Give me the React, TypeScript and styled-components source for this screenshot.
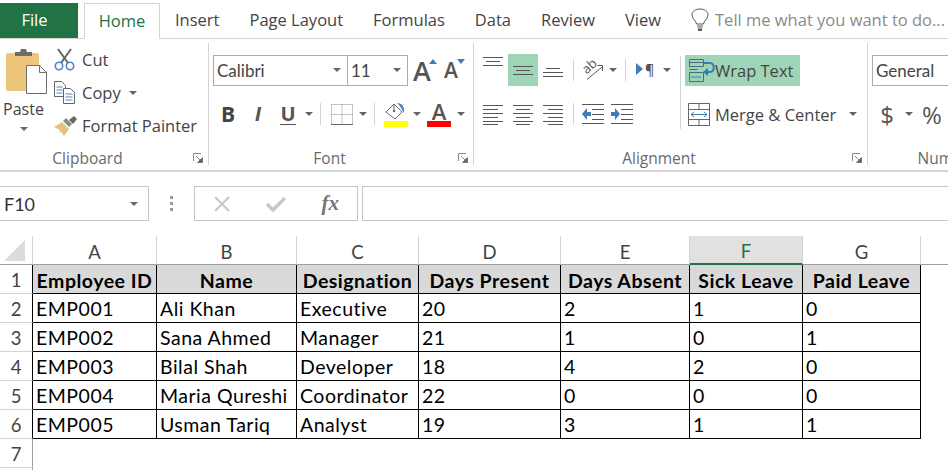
import styled, { createGlobalStyle } from 'styled-components';

const GlobalStyle = createGlobalStyle`
  html, body {
    margin: 0;
    background: #fff;
    overflow: hidden;
  }
  * {
    box-sizing: border-box;
  }
`;

const UI_FONT = `"Open Sans", "Noto Sans", sans-serif`;
const SHEET_FONT = `Lato, "Open Sans", sans-serif`;

const columns = [
  { name: 'A', width: 124 },
  { name: 'B', width: 140 },
  { name: 'C', width: 122 },
  { name: 'D', width: 142 },
  { name: 'E', width: 129 },
  { name: 'F', width: 113 },
  { name: 'G', width: 118 }
];

const header = ['Employee ID', 'Name', 'Designation', 'Days Present', 'Days Absent', 'Sick Leave', 'Paid Leave'];

const rows = [
  ['EMP001', 'Ali Khan', 'Executive', '20', '2', '1', '0'],
  ['EMP002', 'Sana Ahmed', 'Manager', '21', '1', '0', '1'],
  ['EMP003', 'Bilal Shah', 'Developer', '18', '4', '2', '0'],
  ['EMP004', 'Maria Qureshi', 'Coordinator', '22', '0', '0', '0'],
  ['EMP005', 'Usman Tariq', 'Analyst', '19', '3', '1', '1']
];

const tabs = ['Insert', 'Page Layout', 'Formulas', 'Data', 'Review', 'View'];

const Lines = ({ items, width = 20, height = 20, color = '#555' }: { items: number[][]; width?: number; height?: number; color?: string }) => (
  <svg width={width} height={height} viewBox={`0 0 ${width} ${height}`}>
    {items.map(([x1, x2, y], i) => (
      <rect key={i} x={x1} y={y} width={x2 - x1} height={1} fill={color} />
    ))}
  </svg>
);

const Launcher = () => (
  <svg width="10" height="10" viewBox="0 0 10 10">
    <path d="M0.5 8V0.5H8" fill="none" stroke="#8a8a8a" />
    <path d="M3 3l5 5M9.5 4.5v5h-5z" fill="#666" stroke="#666" strokeWidth="0.8" />
  </svg>
);

const PasteIcon = () => (
  <svg width="42" height="47" viewBox="0 0 42 47">
    <rect x="0" y="5" width="33" height="38" rx="2" fill="#edc67c" />
    <path d="M9 8V4h5l1-3h5l1 3h5v4z" fill="#6d6d6d" />
    <path d="M20.5 17.5h13l7 7v21h-20z" fill="#fff" stroke="#6d6d6d" />
    <path d="M33.5 17.5v7h7" fill="none" stroke="#6d6d6d" />
  </svg>
);

const CutIcon = () => (
  <svg width="21" height="23" viewBox="0 0 21 23">
    <path d="M4 1l10 14M17 1L7 15" stroke="#666" strokeWidth="2" fill="none" />
    <circle cx="5" cy="18" r="3.7" fill="none" stroke="#4a86c5" strokeWidth="1.6" />
    <circle cx="16" cy="18" r="3.7" fill="none" stroke="#4a86c5" strokeWidth="1.6" />
  </svg>
);

const CopyIcon = () => (
  <svg width="21" height="23" viewBox="0 0 21 23">
    <path d="M0.5 0.5h7l4 4v11h-11z" fill="#fff" stroke="#666" />
    <path d="M2.5 6h6M2.5 9h6M2.5 12h6" stroke="#4a86c5" />
    <path d="M9.5 7.5h7l4 4v11h-11z" fill="#fff" stroke="#666" />
    <path d="M11.5 13h7M11.5 16h7M11.5 19h7" stroke="#4a86c5" />
  </svg>
);

const PainterIcon = () => (
  <svg width="24" height="22" viewBox="0 0 24 22">
    <path d="M0 12l8-5 7 7-5 7-3-4-2 1 1-3z" fill="#e9c27a" />
    <path d="M9 6l6 6 3-3-6-6z" fill="#8b8b8b" />
    <path d="M15 5l5-4 3 3-4 5z" fill="#666" />
  </svg>
);

const BordersIcon = () => (
  <svg width="22" height="21" viewBox="0 0 22 21">
    <path d="M0.5 0.5h21M0.5 10.5h21M0.5 0.5v20M11 0.5v20M21.5 0.5v20" stroke="#8a8a8a" strokeDasharray="1 1" fill="none" />
    <path d="M0 20.5h22" stroke="#666" />
  </svg>
);

const FillIcon = () => (
  <svg width="24" height="25" viewBox="0 0 24 25">
    <path d="M2 10l8-8 8 8-7 7z" fill="#fff" stroke="#666" />
    <path d="M10 2V9" stroke="#666" />
    <circle cx="10" cy="9" r="1.2" fill="#666" />
    <path d="M13 1c5 0 8 4 7 10l-2-3c-1-3-3-5-5-7z" fill="#4a86c5" />
    <rect x="0" y="19" width="24" height="6" fill="#ffff00" />
  </svg>
);

const OrientIcon = () => (
  <svg width="21" height="20" viewBox="0 0 21 20" overflow="visible">
    <text x="8" y="10" textAnchor="middle" fontFamily="Open Sans" fontSize="13" fill="#555" transform="rotate(-42 8 8)">ab</text>
    <path d="M4 19.500L19 7M14.500 5.500h5v5.500" stroke="#555" fill="none" />
  </svg>
);

const LtrIcon = () => (
  <svg width="21" height="18" viewBox="0 0 21 18" overflow="visible">
    <path d="M0 2l7 6-7 6z" fill="#3f7cb8" />
    <text x="9" y="14" fontFamily="Open Sans" fontWeight="600" fontSize="14" fill="#555">¶</text>
  </svg>
);

const IndentIcon = ({ flip }: { flip?: boolean }) => (
  <svg width="22" height="22" viewBox="0 0 22 22">
    <path d="M0 1.500h22M10 6.500h12M10 11.500h12M10 16.500h12M0 20.500h22" stroke="#555" />
    {flip ? (
      <path d="M0 9h4V5l5 6-5 6v-4H0z" fill="#3f7cb8" />
    ) : (
      <path d="M9 9H5V5l-5 6 5 6v-4h4z" fill="#3f7cb8" />
    )}
  </svg>
);

const WrapIcon = () => (
  <svg width="26" height="24" viewBox="0 0 26 24">
    <path d="M0.500 0.500h14v7h-14zM0.500 3.500h14M0.500 13.500h14v9h-14zM0.500 10.500h8" fill="none" stroke="#4d6a85" />
    <path d="M2 18h10" stroke="#3f7cb8" />
    <path d="M15 4h6c5 0 5 9 0 9h-4" fill="none" stroke="#2f79c2" strokeWidth="2" />
    <path d="M19 9l-5 4 5 4z" fill="#2f79c2" />
  </svg>
);

const MergeIcon = () => (
  <svg width="22" height="23" viewBox="0 0 22 23">
    <path d="M0.500 0.500h21v22h-21zM0.500 6.500h21M0.500 16.500h21M11 0.500v6M11 16.500v6" fill="none" stroke="#666" />
    <path d="M3 11.500h16M6 9l-3 2.500L6 14M16 9l3 2.500L16 14" fill="none" stroke="#3f7cb8" />
  </svg>
);

const BulbIcon = () => (
  <svg width="18" height="23" viewBox="0 0 18 23">
    <path d="M5.500 16c0-3-4.500-5-4.500-9 0-3.500 3.500-6 8-6s8 2.500 8 6c0 4-4.500 6-4.500 9z" fill="none" stroke="#555" />
    <path d="M6 18h6M6.500 20h5" stroke="#555" />
    <path d="M7 22h4" stroke="#222" strokeWidth="1.500" />
  </svg>
);

const CloseIcon = () => (
  <svg width="18" height="16" viewBox="0 0 18 16">
    <path d="M2 1l14 14M16 1L2 15" stroke="#c8c8c8" strokeWidth="2.200" fill="none" />
  </svg>
);

const CheckIcon = () => (
  <svg width="20" height="16" viewBox="0 0 20 16">
    <path d="M1 8l6 6L19 2" stroke="#c8c8c8" strokeWidth="3.500" fill="none" />
  </svg>
);

const Triangle = ({ down, color }: { down?: boolean; color: string }) => (
  <svg width="8" height="5" viewBox="0 0 8 5">
    <path d={down ? 'M0 0h8L4 5z' : 'M0 5h8L4 0z'} fill={color} />
  </svg>
);

const App = () => (
  <Page>
    <GlobalStyle />
    <TabBar>
      <FileTab>File</FileTab>
      <HomeTab>Home</HomeTab>
      {tabs.map((t) => (
        <Tab key={t}>{t}</Tab>
      ))}
      <TellMe>
        <BulbIcon />
        <span>Tell me what you want to do...</span>
      </TellMe>
    </TabBar>

    <Ribbon>
      <Group $w={209}>
        <ClipboardBody>
          <PasteCol>
            <PasteIcon />
            <PasteLabel>Paste</PasteLabel>
            <PasteCaret />
          </PasteCol>
          <SmallStack>
            <SmallBtn>
              <SmallIcon><CutIcon /></SmallIcon>
              Cut
            </SmallBtn>
            <SmallBtn>
              <SmallIcon><CopyIcon /></SmallIcon>
              Copy
              <CaretSlot $w={24}><Caret /></CaretSlot>
            </SmallBtn>
            <SmallBtn>
              <SmallIcon><PainterIcon /></SmallIcon>
              Format Painter
            </SmallBtn>
          </SmallStack>
        </ClipboardBody>
        <GroupFoot>
          <GroupName $shift={28}>Clipboard</GroupName>
          <LauncherSlot><Launcher /></LauncherSlot>
        </GroupFoot>
      </Group>

      <Group $w={265}>
        <FontBody>
          <ToolRow>
            <Combo $w={135}>
              <ComboText>Calibri</ComboText>
              <Caret />
            </Combo>
            <Combo $w={61} $joined>
              <ComboText>11</ComboText>
              <Caret />
            </Combo>
            <Slot $w={32}>
              <GrowA>A</GrowA>
              <TriUp><Triangle color="#3f7cb8" /></TriUp>
            </Slot>
            <Slot $w={28}>
              <ShrinkA>A</ShrinkA>
              <TriUp><Triangle down color="#3f7cb8" /></TriUp>
            </Slot>
          </ToolRow>
          <ToolRow>
            <Slot $w={30}><BoldGlyph>B</BoldGlyph></Slot>
            <Slot $w={30}><ItalicGlyph>I</ItalicGlyph></Slot>
            <Slot $w={30}><UnderGlyph>U</UnderGlyph></Slot>
            <CaretSlot $w={12}><Caret /></CaretSlot>
            <Sep />
            <Slot $w={31}><BordersIcon /></Slot>
            <CaretSlot $w={12}><Caret /></CaretSlot>
            <Sep />
            <Slot $w={32}><FillIcon /></Slot>
            <CaretSlot $w={10}><Caret /></CaretSlot>
            <Slot $w={34}>
              <ColorA>A</ColorA>
            </Slot>
            <CaretSlot $w={10}><Caret /></CaretSlot>
          </ToolRow>
        </FontBody>
        <GroupFoot>
          <GroupName $shift={18}>Font</GroupName>
          <LauncherSlot><Launcher /></LauncherSlot>
        </GroupFoot>
      </Group>

      <Group $w={394}>
        <AlignBody>
          <AlignLeft>
            <ToolRow>
              <Slot $w={30} $align="flex-start">
                <Lines items={[[0, 20, 3], [3, 17, 7], [0, 20, 11]]} height={14} />
              </Slot>
              <Slot $w={30} $active>
                <Lines items={[[0, 20, 2], [3, 17, 6], [0, 20, 10]]} height={13} />
              </Slot>
              <Slot $w={30} $align="flex-end">
                <Lines items={[[3, 17, 1], [0, 20, 5], [0, 20, 9]]} height={16} />
              </Slot>
              <Sep />
              <Slot $w={28}><OrientIcon /></Slot>
              <CaretSlot $w={11}><Caret /></CaretSlot>
              <Sep $ml={7} />
              <Slot $w={30}><LtrIcon /></Slot>
              <CaretSlot $w={12}><Caret /></CaretSlot>
            </ToolRow>
            <ToolRow>
              <Slot $w={30}>
                <Lines items={[[0, 20, 1], [0, 15, 5], [0, 20, 9], [0, 15, 13], [0, 20, 17], [0, 15, 20]]} height={21} />
              </Slot>
              <Slot $w={30}>
                <Lines items={[[0, 20, 1], [3, 17, 5], [0, 20, 9], [3, 17, 13], [0, 20, 17], [3, 17, 20]]} height={21} />
              </Slot>
              <Slot $w={30}>
                <Lines items={[[0, 20, 1], [5, 20, 5], [0, 20, 9], [5, 20, 13], [0, 20, 17], [5, 20, 20]]} height={21} />
              </Slot>
              <Sep />
              <Slot $w={28}><IndentIcon /></Slot>
              <Slot $w={30}><IndentIcon flip /></Slot>
            </ToolRow>
          </AlignLeft>
          <TallSep />
          <AlignRight>
            <WrapBtn>
              <WrapIcon />
              Wrap Text
            </WrapBtn>
            <MergeBtn>
              <MergeIcon />
              Merge &amp; Center
              <CaretSlot $w={24}><Caret /></CaretSlot>
            </MergeBtn>
          </AlignRight>
        </AlignBody>
        <GroupFoot>
          <GroupName $shift={18}>Alignment</GroupName>
          <LauncherSlot><Launcher /></LauncherSlot>
        </GroupFoot>
      </Group>

      <Group $w={164} $open>
        <FontBody>
          <ToolRow>
            <Combo $w={150}>
              <ComboText>General</ComboText>
            </Combo>
          </ToolRow>
          <ToolRow>
            <Slot $w={30}><Glyph>$</Glyph></Slot>
            <CaretSlot $w={14}><Caret /></CaretSlot>
            <Slot $w={32}><Glyph>%</Glyph></Slot>
          </ToolRow>
        </FontBody>
        <GroupFoot>
          <GroupName>Number</GroupName>
          <span />
        </GroupFoot>
      </Group>
    </Ribbon>

    <FormulaBar>
      <NameBox>
        F10
        <Caret />
      </NameBox>
      <Grip>
        <i />
        <i />
        <i />
      </Grip>
      <FxBox>
        <CloseIcon />
        <CheckIcon />
        <FxText>fx</FxText>
      </FxBox>
      <FormulaInput />
    </FormulaBar>

    <Sheet>
      <SheetRow>
        <Corner>
          <svg width="21" height="21" viewBox="0 0 21 21">
            <path d="M21 0v21H0z" fill="#dcdcdc" />
          </svg>
        </Corner>
        {columns.map((c) => (
          <ColHead key={c.name} $w={c.width} $selected={c.name === 'F'}>
            {c.name}
          </ColHead>
        ))}
        <ColRest />
      </SheetRow>
      <SheetRow>
        <RowNum $table>1</RowNum>
        {header.map((h, i) => (
          <HeadCell key={h} $w={columns[i].width}>{h}</HeadCell>
        ))}
      </SheetRow>
      {rows.map((row, r) => (
        <SheetRow key={row[0]}>
          <RowNum $table>{r + 2}</RowNum>
          {row.map((v, i) => (
            <Cell key={i} $w={columns[i].width}>{v}</Cell>
          ))}
        </SheetRow>
      ))}
      <SheetRow>
        <RowNum>7</RowNum>
      </SheetRow>
      <SheetRow>
        <RowNum />
      </SheetRow>
    </Sheet>
  </Page>
);

export default App;

const Page = styled.div`
  width: 948px;
  height: 470px;
  overflow: hidden;
  background: #fff;
  font-family: ${UI_FONT};
`;

const TabBar = styled.div`
  display: flex;
  align-items: stretch;
  height: 39px;
  padding-top: 3px;
  border-bottom: 1px solid #d4d4d4;
  font-size: 16.5px;
  color: #444;
`;

const FileTab = styled.div`
  width: 78px;
  margin-right: 6px;
  display: flex;
  align-items: center;
  justify-content: center;
  padding: 0 9px 2px 0;
  background: #217346;
  color: #fff;
`;

const HomeTab = styled.div`
  width: 76px;
  height: 36px;
  display: flex;
  align-items: center;
  justify-content: center;
  padding-bottom: 2px;
  background: #fff;
  color: #217346;
  border: 1px solid #d4d4d4;
  border-bottom: none;
`;

const Tab = styled.div`
  display: flex;
  align-items: center;
  padding: 0 15px 2px;
`;

const TellMe = styled.div`
  display: flex;
  align-items: center;
  gap: 6px;
  margin-left: 15px;
  padding-bottom: 2px;
  color: #8a8a8a;
  white-space: nowrap;
`;

const Ribbon = styled.div`
  display: flex;
  height: 133px;
  padding: 4px 0 5px;
  overflow: hidden;
  border-bottom: 2px solid #d4d4d4;
`;

const Group = styled.div<{ $w: number; $open?: boolean }>`
  flex: none;
  width: ${({ $w }) => $w}px;
  display: flex;
  flex-direction: column;
  border-right: ${({ $open }) => ($open ? 'none' : '1px solid #d4d4d4')};
`;

const GroupFoot = styled.div`
  display: grid;
  grid-template-columns: 1fr auto 1fr;
  align-items: center;
  height: 14px;
  padding-right: 5px;
`;

const GroupName = styled.div<{ $shift?: number }>`
  grid-column: 2;
  margin-right: ${({ $shift }) => $shift ?? 0}px;
  font-size: 15.5px;
  line-height: 14px;
  color: #6a6a6a;
`;

const LauncherSlot = styled.div`
  grid-column: 3;
  justify-self: end;
  display: flex;
`;

const ClipboardBody = styled.div`
  flex: 1;
  display: flex;
`;

const PasteCol = styled.div`
  width: 47px;
  display: flex;
  flex-direction: column;
  align-items: center;
  padding: 5px 0 0 6px;
`;

const PasteLabel = styled.div`
  margin-top: 3px;
  margin-left: -6px;
  font-size: 16px;
  line-height: 22px;
  color: #444;
`;

const SmallStack = styled.div`
  display: flex;
  flex-direction: column;
  margin-left: 7px;
`;

const SmallBtn = styled.div`
  display: flex;
  align-items: center;
  height: 33px;
  font-size: 16.5px;
  color: #444;
  white-space: nowrap;
`;

const SmallIcon = styled.div`
  width: 28px;
  display: flex;
  align-items: center;
`;

const Caret = styled.span`
  flex: none;
  width: 0;
  height: 0;
  border-left: 4px solid transparent;
  border-right: 4px solid transparent;
  border-top: 4px solid #666;
`;

const PasteCaret = styled(Caret)`
  margin: 7px 6px 0 0;
`;

const CaretSlot = styled.div<{ $w: number }>`
  flex: none;
  width: ${({ $w }) => $w}px;
  display: flex;
  align-items: center;
  justify-content: center;
`;

const FontBody = styled.div`
  flex: 1;
  display: flex;
  flex-direction: column;
  gap: 12px;
  padding: 11px 0 0 4px;
`;

const ToolRow = styled.div`
  display: flex;
  align-items: center;
  height: 32px;
`;

const Combo = styled.div<{ $w: number; $joined?: boolean }>`
  flex: none;
  width: ${({ $w }) => $w}px;
  height: 31px;
  display: flex;
  align-items: center;
  padding: 0 6px 0 3px;
  margin-left: ${({ $joined }) => ($joined ? '-1px' : '0')};
  border: 1px solid #ababab;
  background: #fff;
`;

const ComboText = styled.span`
  flex: 1;
  font-family: ${SHEET_FONT};
  font-size: 17px;
  color: #444;
`;

const Slot = styled.div<{ $w: number; $active?: boolean; $align?: string }>`
  flex: none;
  position: relative;
  width: ${({ $w }) => $w}px;
  height: 32px;
  display: flex;
  align-items: ${({ $align }) => $align ?? 'center'};
  justify-content: center;
  padding: ${({ $align }) => ($align ? '0 0 3px' : '0')};
  background: ${({ $active }) => ($active ? '#9fd5b7' : 'transparent')};
`;

const GrowA = styled.span`
  font-size: 27px;
  line-height: 1;
  font-weight: 600;
  color: #555;
  margin-right: 4px;
`;

const ShrinkA = styled.span`
  font-size: 21px;
  line-height: 1;
  font-weight: 600;
  color: #555;
  margin-right: 6px;
`;

const TriUp = styled.span`
  position: absolute;
  right: 3px;
  top: 5px;
  display: flex;
`;

const BoldGlyph = styled.span`
  font-size: 21px;
  font-weight: 700;
  color: #444;
`;

const ItalicGlyph = styled.span`
  font-size: 21px;
  font-weight: 600;
  font-style: italic;
  font-family: "Liberation Sans", sans-serif;
  color: #555;
`;

const UnderGlyph = styled.span`
  font-size: 20px;
  font-weight: 700;
  line-height: 21px;
  color: #555;
  border-bottom: 1.5px solid #555;
`;

const ColorA = styled.span`
  width: 24px;
  height: 25px;
  text-align: center;
  font-size: 22px;
  line-height: 19px;
  font-weight: 600;
  color: #555;
  border-bottom: 6px solid #ff0000;
`;

const Glyph = styled.span`
  font-size: 24px;
  color: #555;
`;

const Sep = styled.div<{ $ml?: number }>`
  flex: none;
  width: 1px;
  height: 22px;
  margin: 0 5px 0 ${({ $ml }) => $ml ?? 5}px;
  background: #d4d4d4;
`;

const AlignBody = styled.div`
  flex: 1;
  display: flex;
  padding: 11px 0 0 4px;
`;

const AlignLeft = styled.div`
  display: flex;
  flex-direction: column;
  gap: 12px;
`;

const TallSep = styled.div`
  flex: none;
  width: 1px;
  height: 73px;
  margin: 2px 4px 0 7px;
  background: #d4d4d4;
`;

const AlignRight = styled.div`
  display: flex;
  flex-direction: column;
  align-items: flex-start;
  gap: 12px;
  padding-top: 1px;
`;

const WrapBtn = styled.div`
  width: 115px;
  height: 31px;
  display: flex;
  align-items: center;
  padding-left: 4px;
  background: #9fd5b7;
  font-size: 16.5px;
  color: #444;
  white-space: nowrap;
`;

const MergeBtn = styled.div`
  height: 32px;
  display: flex;
  align-items: center;
  gap: 5px;
  padding-left: 3px;
  font-size: 16.5px;
  color: #444;
  white-space: nowrap;
`;

const FormulaBar = styled.div`
  display: flex;
  height: 35px;
  margin-top: 14px;
`;

const NameBox = styled.div`
  flex: none;
  width: 149px;
  display: flex;
  align-items: center;
  justify-content: space-between;
  padding: 0 10px 0 4px;
  border: 1px solid #c6c6c6;
  border-left: none;
  font-family: ${SHEET_FONT};
  font-size: 18px;
  color: #333;
`;

const Grip = styled.div`
  flex: none;
  width: 45px;
  display: flex;
  flex-direction: column;
  align-items: center;
  justify-content: center;
  gap: 3px;
  i {
    width: 3px;
    height: 3px;
    background: #9a9a9a;
  }
`;

const FxBox = styled.div`
  flex: none;
  width: 164px;
  display: flex;
  align-items: center;
  justify-content: space-between;
  padding: 0 18px 0 18px;
  border: 1px solid #c6c6c6;
`;

const FxText = styled.span`
  font-family: "Liberation Serif", serif;
  font-style: italic;
  font-weight: 700;
  font-size: 21px;
  color: #777;
`;

const FormulaInput = styled.div`
  flex: 1;
  margin-left: 4px;
  border: 1px solid #c6c6c6;
  border-right: none;
`;

const Sheet = styled.div`
  margin-top: 15px;
  font-family: ${SHEET_FONT};
`;

const SheetRow = styled.div`
  display: flex;
  height: 29px;
`;

const Corner = styled.div`
  flex: none;
  width: 33px;
  display: flex;
  align-items: flex-end;
  justify-content: center;
  padding: 0 3px 3px 0;
  border-right: 1px solid #d4d4d4;
  border-bottom: 1px solid #9f9f9f;
`;

const ColHead = styled.div<{ $w: number; $selected?: boolean }>`
  flex: none;
  width: ${({ $w }) => $w}px;
  display: flex;
  align-items: center;
  justify-content: center;
  padding-top: 3px;
  font-size: 18.5px;
  color: ${({ $selected }) => ($selected ? '#217346' : '#444')};
  background: ${({ $selected }) => ($selected ? '#e1e1e1' : '#fff')};
  border-right: 1px solid #d4d4d4;
  border-bottom: ${({ $selected }) => ($selected ? '2px solid #217346' : '1px solid #9f9f9f')};
`;

const ColRest = styled.div`
  flex: 1;
  border-bottom: 1px solid #9f9f9f;
`;

const RowNum = styled.div<{ $table?: boolean }>`
  flex: none;
  width: 33px;
  display: flex;
  align-items: center;
  justify-content: center;
  padding-top: 2px;
  font-size: 18.5px;
  color: #444;
  border-right: 1px solid ${({ $table }) => ($table ? '#000' : '#9f9f9f')};
  border-bottom: 1px solid #d4d4d4;
`;

const Cell = styled.div<{ $w: number }>`
  flex: none;
  width: ${({ $w }) => $w}px;
  display: flex;
  align-items: center;
  padding: 0 0 0 3px;
  font-size: 19.5px;
  letter-spacing: 0.5px;
  color: #000;
  white-space: nowrap;
  border-right: 1px solid #000;
  border-bottom: 1px solid #000;
`;

const HeadCell = styled(Cell)`
  justify-content: center;
  padding: 3px 0 0;
  font-weight: 700;
  background: #d9d9d9;
`;
